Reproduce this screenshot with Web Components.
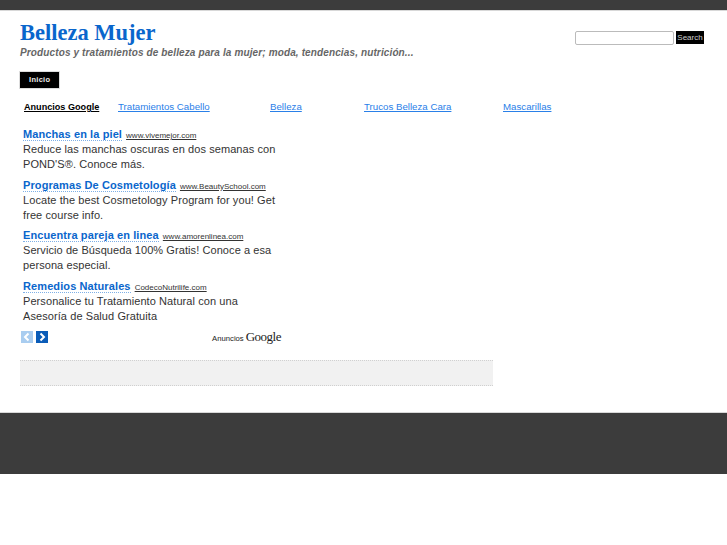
<!DOCTYPE html>
<html lang="es">
<head>
<meta charset="utf-8">
<title>Belleza Mujer</title>
<style>
html, body { margin: 0; padding: 0; background: #fff; }
body { font-family: "Liberation Sans", Arial, sans-serif; }
</style>
</head>
<body>
<site-page>
  <site-header slot="header" site-title="Belleza Mujer" tagline="Productos y tratamientos de belleza para la mujer; moda, tendencias, nutrición..."></site-header>
  <nav-tab slot="nav">Inicio</nav-tab>
  <link-units slot="links" links="Tratamientos Cabello|Belleza|Trucos Belleza Cara|Mascarillas"></link-units>
  <ad-unit slot="ads">
    <ad-item title-text="Manchas en la piel" url="www.vivemejor.com">Reduce las manchas oscuras en dos semanas con POND'S®. Conoce más.</ad-item>
    <ad-item title-text="Programas De Cosmetología" url="www.BeautySchool.com">Locate the best Cosmetology Program for you! Get free course info.</ad-item>
    <ad-item title-text="Encuentra pareja en linea" url="www.amorenlinea.com">Servicio de Búsqueda 100% Gratis! Conoce a esa persona especial.</ad-item>
    <ad-item title-text="Remedios Naturales" url="CodecoNutrilife.com">Personalice tu Tratamiento Natural con una Asesoría de Salud Gratuita</ad-item>
  </ad-unit>
</site-page>

<script>
class SitePage extends HTMLElement {
  constructor() {
    super();
    this.attachShadow({ mode: "open" });
    this.shadowRoot.innerHTML = `
      <style>
        :host { display: block; }
        #topbar { height: 10px; background: #3c3c3c; border-bottom: 1px solid #d8d8d8; }
        #content { padding: 0 0 0 19px; height: 401px; box-sizing: border-box; }
        #nav { padding-top: 10px; }
        #strip {
          width: 473px; height: 26px; margin: 16px 0 0 1px; box-sizing: border-box;
          background: #f1f1f1;
          border-top: 1px dotted #d0d0d0;
          border-bottom: 1px dotted #d0d0d0;
        }
        #footer { height: 61px; background: #3c3c3c; border-top: 1px solid #d8d8d8; }
      </style>
      <div id="topbar"></div>
      <div id="content">
        <slot name="header"></slot>
        <div id="nav"><slot name="nav"></slot></div>
        <slot name="links"></slot>
        <slot name="ads"></slot>
        <div id="strip"></div>
      </div>
      <div id="footer"></div>
    `;
  }
}

class SiteHeader extends HTMLElement {
  constructor() {
    super();
    this.attachShadow({ mode: "open" });
    this.shadowRoot.innerHTML = `
      <style>
        :host { display: flex; justify-content: space-between; align-items: flex-start; height: 50px; padding-right: 23px; padding-left: 1px; }
        h1 {
          margin: 9px 0 0; font: bold 22.5px/26px "Liberation Serif", serif;
          color: #0a66cc;
        }
        p {
          margin: 0; font: italic bold 10px/13px "Liberation Sans", sans-serif;
          color: #666; letter-spacing: 0.125px;
        }
        form { display: flex; gap: 2px; margin-top: 20px; align-items: flex-start; }
        input {
          width: 99px; height: 14px; box-sizing: border-box; margin: 0; padding: 0;
          border: 1px solid #bbb; border-radius: 2px; background: #fff; outline: 0;
        }
        button {
          width: 28px; height: 13px; margin: 0; padding: 0; border: 0;
          background: #000; color: #ccc; font: 8px/13px "Liberation Sans", sans-serif;
        }
      </style>
      <div>
        <h1></h1>
        <p></p>
      </div>
      <form><input type="text"><button type="button">Search</button></form>
    `;
  }

  connectedCallback() {
    this.shadowRoot.querySelector("h1").textContent = this.getAttribute("site-title");
    this.shadowRoot.querySelector("p").textContent = this.getAttribute("tagline");
  }
}

class NavTab extends HTMLElement {
  constructor() {
    super();
    this.attachShadow({ mode: "open" });
    this.shadowRoot.innerHTML = `
      <style>
        :host {
          display: block; box-sizing: border-box; width: 41px;
          height: 18px; padding: 0 9px; background: #000; color: #eee;
          border: 1px solid #ddd;
          font: bold 7.5px/16px "Liberation Sans", sans-serif; letter-spacing: 0.3px;
        }
      </style>
      <slot></slot>
    `;
  }
}

class LinkUnits extends HTMLElement {
  constructor() {
    super();
    this.attachShadow({ mode: "open" });
    this.shadowRoot.innerHTML = `
      <style>
        :host {
          display: block; padding: 11px 0 0 5px; height: 27px; box-sizing: border-box;
          font: 9.7px/14px "Liberation Sans", sans-serif;
        }
        #row { display: flex; }
        b { width: 94px; color: #000; text-decoration: underline; font-weight: bold; font-size: 9.1px; }
        a { color: #2a80e8; text-decoration: underline; }
        a:nth-of-type(1) { width: 152px; }
        a:nth-of-type(2) { width: 94px; }
        a:nth-of-type(3) { width: 139px; }
      </style>
      <div id="row"><b>Anuncios Google</b></div>
    `;
  }

  connectedCallback() {
    const row = this.shadowRoot.getElementById("row");
    for (const text of this.getAttribute("links").split("|")) {
      const link = document.createElement("a");
      link.href = "#";
      link.textContent = text;
      row.appendChild(link);
    }
  }
}

class AdUnit extends HTMLElement {
  constructor() {
    super();
    this.attachShadow({ mode: "open" });
    this.shadowRoot.innerHTML = `
      <style>
        :host { display: block; width: 262px; padding: 11px 0 0 2px; }
        #foot { display: flex; justify-content: space-between; align-items: center; height: 14px; }
        #arrows { display: flex; gap: 3px; }
        .arrow { width: 12px; height: 12px; display: block; }
        #brand { display: flex; align-items: baseline; gap: 2px; color: #222; font: 7.7px "Liberation Sans", sans-serif; margin-right: 2px; }
        #brand span { font: 13px/14px "Liberation Serif", serif; letter-spacing: -0.5px; }
      </style>
      <slot></slot>
      <div id="foot">
        <div id="arrows">
          <svg class="arrow" viewBox="0 0 12 12"><rect width="12" height="12" fill="#a9cdf0"/><path d="M7.5 2.5 4 6l3.5 3.5" fill="none" stroke="#fff" stroke-width="2"/></svg>
          <svg class="arrow" viewBox="0 0 12 12"><rect width="12" height="12" fill="#0a5cb8"/><path d="M4.5 2.5 8 6 4.5 9.5" fill="none" stroke="#fff" stroke-width="2"/></svg>
        </div>
        <div id="brand">Anuncios <span>Google</span></div>
      </div>
    `;
  }
}

class AdItem extends HTMLElement {
  constructor() {
    super();
    this.attachShadow({ mode: "open" });
    this.shadowRoot.innerHTML = `
      <style>
        :host { display: block; padding: 0 5px 0 2px; margin-bottom: 5.9px; font: 11px/14.9px "Liberation Sans", sans-serif; color: #333; letter-spacing: 0.08px; }
        #head { height: 14px; line-height: 14px; white-space: nowrap; letter-spacing: 0; }
        #body { margin-top: 1px; }
        a { color: #0a66cc; font-weight: bold; font-size: 11px; text-decoration: none; border-bottom: 1px dotted #7fb0e6; letter-spacing: 0.1px; }
        small { color: #333; font-size: 8px; text-decoration: underline; margin-left: 1px; }
      </style>
      <div id="head"><a href="#"></a> <small></small></div>
      <div id="body"><slot></slot></div>
    `;
  }

  connectedCallback() {
    this.shadowRoot.querySelector("a").textContent = this.getAttribute("title-text");
    this.shadowRoot.querySelector("small").textContent = this.getAttribute("url");
  }
}

customElements.define("site-page", SitePage);
customElements.define("site-header", SiteHeader);
customElements.define("nav-tab", NavTab);
customElements.define("link-units", LinkUnits);
customElements.define("ad-unit", AdUnit);
customElements.define("ad-item", AdItem);
</script>
</body>
</html>
